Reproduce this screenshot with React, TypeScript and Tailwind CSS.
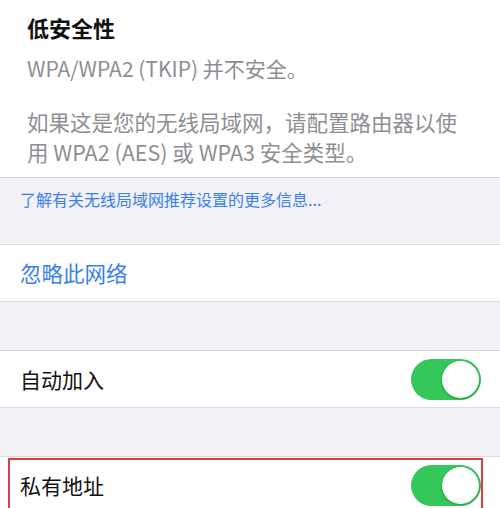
import React from 'react'

const FONT = { fontFamily: '"PingFang SC", "Noto Sans CJK SC", "Noto Sans", sans-serif' }

function Toggle() {
  return (
    <div className="flex h-[41px] w-[70px] items-center justify-end rounded-full bg-[#34c759] p-[2px]">
      <div className="h-[37px] w-[37px] rounded-full bg-white shadow-[0_1px_3px_rgba(0,0,0,0.25)]" />
    </div>
  )
}

function ToggleRow({ label, highlighted }: { label: string; highlighted?: boolean }) {
  return (
    <div className="relative flex h-[57px] items-center justify-between border-t border-[#dcdce0] bg-white pl-[20px] pr-[19px]">
      <span className="text-[21px] leading-[28px] text-[#111]">{label}</span>
      <Toggle />
      {highlighted ? (
        <div className="absolute left-[8px] top-[1px] h-[70px] w-[475px] border-2 border-[#e23b40]" />
      ) : null}
    </div>
  )
}

export default function App() {
  return (
    <div className="h-[508px] w-[500px] overflow-hidden bg-[#f1f1f6]" style={FONT}>
      {/* Security warning */}
      <div className="h-[178px] border-b border-[#dcdce0] bg-white pl-[27px] pt-[12px]">
        <h1 className="text-[22px] font-semibold leading-[30px] text-[#111]">低安全性</h1>
        <p className="mt-[11px] text-[21px] leading-[30px] text-[#8e8e93]">WPA/WPA2 (TKIP) 并不安全。</p>
        <p className="mt-[24px] text-[21.5px] leading-[30px] text-[#8e8e93]">
          如果这是您的无线局域网，请配置路由器以使
          <br />
          用 WPA2 (AES) 或 WPA3 安全类型。
        </p>
      </div>

      {/* Footer link */}
      <div className="h-[66px] pl-[20px] pt-[9px]">
        <span className="text-[16px] leading-[22px] text-[#3a7ff0]">了解有关无线局域网推荐设置的更多信息...</span>
      </div>

      {/* Forget network */}
      <div className="flex h-[58px] items-center border-y border-[#dcdce0] bg-white pl-[20px]">
        <span className="text-[21.5px] leading-[28px] text-[#3a7ff0]">忽略此网络</span>
      </div>

      <div className="h-[48px]" />

      <div className="border-b border-[#dcdce0]">
        <ToggleRow label="自动加入" />
      </div>

      <div className="h-[48px]" />

      <ToggleRow label="私有地址" highlighted />
    </div>
  )
}
